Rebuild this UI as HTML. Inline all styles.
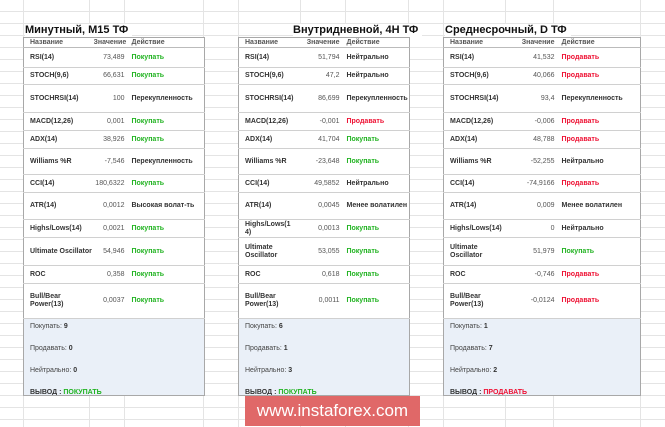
<!DOCTYPE html>
<html><head><meta charset="utf-8"><style>
*{margin:0;padding:0;box-sizing:border-box}
body{width:665px;height:427px;overflow:hidden;background:#fff;position:relative;font-family:"Liberation Sans",Arial,sans-serif;
background-image:repeating-linear-gradient(to bottom,transparent 0,transparent 11px,#e4e4e4 11px,#e4e4e4 12px);}
.v{position:absolute;top:0;width:1px;height:427px;background:#e4e4e4}
.t{position:absolute;top:24px;font-size:11px;font-weight:bold;color:#111;background:#fff;height:13px;line-height:13px;padding-right:4px}
table{position:absolute;top:37px;border-collapse:collapse;table-layout:fixed;background:#fff;border:1px solid #a8a8a8;font-size:7px;color:#444}
td{border-top:1px solid #d0d0d0;vertical-align:middle;padding:0 0 0 6px;line-height:8px;overflow:hidden;white-space:nowrap}
td.n{font-weight:bold;color:#333;white-space:normal}
td.val{text-align:right;padding:0 3px 0 0;color:#555}
td.a{font-weight:bold;color:#333;padding-left:4px}
tr.h td{height:10px;color:#555;border-top:none;border-bottom:1px solid #bbb;font-weight:bold}
.g{color:#22b322!important}.r{color:#ee1133!important}
td.s{background:#eaf0f8;padding:0 0 0 6px;vertical-align:top;white-space:normal;color:#444}
td.s div{height:76px;line-height:22px;margin-top:-3px}
td.s b{color:#333}
.wm{position:absolute;left:245px;top:396px;width:175px;height:30px;background:#e06868;color:#fff;font-size:17px;line-height:30px;text-align:center}
</style></head><body>
<div class="v" style="left:23px"></div><div class="v" style="left:89px"></div><div class="v" style="left:124px"></div><div class="v" style="left:203px"></div><div class="v" style="left:238px"></div><div class="v" style="left:300px"></div><div class="v" style="left:345px"></div><div class="v" style="left:408px"></div><div class="v" style="left:443px"></div><div class="v" style="left:505px"></div><div class="v" style="left:553px"></div><div class="v" style="left:640px"></div>

<div class="t" style="left:25px">Минутный, M15 ТФ</div>
<div class="t" style="left:293px">Внутридневной, 4H ТФ</div>
<div class="t" style="left:445px">Среднесрочный, D ТФ</div>

<table style="left:23px;width:181px">
<colgroup><col style="width:70px"><col style="width:34px"><col style="width:77px"></colgroup>
<tr class="h"><td>Название</td><td class="val">Значение</td><td class="a" style="color:#555">Действие</td></tr>
<tr style="height:20px"><td class="n">RSI(14)</td><td class="val">73,489</td><td class="a g">Покупать</td></tr>
<tr style="height:17px"><td class="n">STOCH(9,6)</td><td class="val">66,631</td><td class="a g">Покупать</td></tr>
<tr style="height:28px"><td class="n">STOCHRSI(14)</td><td class="val">100</td><td class="a">Перекупленность</td></tr>
<tr style="height:18px"><td class="n">MACD(12,26)</td><td class="val">0,001</td><td class="a g">Покупать</td></tr>
<tr style="height:18px"><td class="n">ADX(14)</td><td class="val">38,926</td><td class="a g">Покупать</td></tr>
<tr style="height:26px"><td class="n">Williams %R</td><td class="val">-7,546</td><td class="a">Перекупленность</td></tr>
<tr style="height:18px"><td class="n">CCI(14)</td><td class="val">180,6322</td><td class="a g">Покупать</td></tr>
<tr style="height:27px"><td class="n">ATR(14)</td><td class="val">0,0012</td><td class="a">Высокая волат-ть</td></tr>
<tr style="height:18px"><td class="n">Highs/Lows(14)</td><td class="val">0,0021</td><td class="a g">Покупать</td></tr>
<tr style="height:28px"><td class="n" style="white-space:nowrap">Ultimate Oscillator</td><td class="val">54,946</td><td class="a g">Покупать</td></tr>
<tr style="height:18px"><td class="n">ROC</td><td class="val">0,358</td><td class="a g">Покупать</td></tr>
<tr style="height:35px"><td class="n">Bull/Bear<br>Power(13)</td><td class="val">0,0037</td><td class="a g">Покупать</td></tr>
<tr style="height:77px"><td class="s" colspan="3"><div>Покупать: <b>9</b><br>Продавать: <b>0</b><br>Нейтрально: <b>0</b><br><b>ВЫВОД : </b><b class="g">ПОКУПАТЬ</b></div></td></tr>
</table>

<table style="left:238px;width:171px">
<colgroup><col style="width:62px"><col style="width:42px"><col style="width:67px"></colgroup>
<tr class="h"><td>Название</td><td class="val">Значение</td><td class="a" style="color:#555">Действие</td></tr>
<tr style="height:20px"><td class="n">RSI(14)</td><td class="val">51,794</td><td class="a">Нейтрально</td></tr>
<tr style="height:17px"><td class="n">STOCH(9,6)</td><td class="val">47,2</td><td class="a">Нейтрально</td></tr>
<tr style="height:28px"><td class="n">STOCHRSI(14)</td><td class="val">86,699</td><td class="a">Перекупленность</td></tr>
<tr style="height:18px"><td class="n">MACD(12,26)</td><td class="val">-0,001</td><td class="a r">Продавать</td></tr>
<tr style="height:18px"><td class="n">ADX(14)</td><td class="val">41,704</td><td class="a g">Покупать</td></tr>
<tr style="height:26px"><td class="n">Williams %R</td><td class="val">-23,648</td><td class="a g">Покупать</td></tr>
<tr style="height:18px"><td class="n">CCI(14)</td><td class="val">49,5852</td><td class="a">Нейтрально</td></tr>
<tr style="height:27px"><td class="n">ATR(14)</td><td class="val">0,0045</td><td class="a">Менее волатилен</td></tr>
<tr style="height:18px"><td class="n">Highs/Lows(1<br>4)</td><td class="val">0,0013</td><td class="a g">Покупать</td></tr>
<tr style="height:28px"><td class="n">Ultimate<br>Oscillator</td><td class="val">53,055</td><td class="a g">Покупать</td></tr>
<tr style="height:18px"><td class="n">ROC</td><td class="val">0,618</td><td class="a g">Покупать</td></tr>
<tr style="height:35px"><td class="n">Bull/Bear<br>Power(13)</td><td class="val">0,0011</td><td class="a g">Покупать</td></tr>
<tr style="height:77px"><td class="s" colspan="3"><div>Покупать: <b>6</b><br>Продавать: <b>1</b><br>Нейтрально: <b>3</b><br><b>ВЫВОД : </b><b class="g">ПОКУПАТЬ</b></div></td></tr>
</table>

<table style="left:443px;width:197px">
<colgroup><col style="width:72px"><col style="width:42px"><col style="width:83px"></colgroup>
<tr class="h"><td>Название</td><td class="val">Значение</td><td class="a" style="color:#555">Действие</td></tr>
<tr style="height:20px"><td class="n">RSI(14)</td><td class="val">41,532</td><td class="a r">Продавать</td></tr>
<tr style="height:17px"><td class="n">STOCH(9,6)</td><td class="val">40,066</td><td class="a r">Продавать</td></tr>
<tr style="height:28px"><td class="n">STOCHRSI(14)</td><td class="val">93,4</td><td class="a">Перекупленность</td></tr>
<tr style="height:18px"><td class="n">MACD(12,26)</td><td class="val">-0,006</td><td class="a r">Продавать</td></tr>
<tr style="height:18px"><td class="n">ADX(14)</td><td class="val">48,788</td><td class="a r">Продавать</td></tr>
<tr style="height:26px"><td class="n">Williams %R</td><td class="val">-52,255</td><td class="a">Нейтрально</td></tr>
<tr style="height:18px"><td class="n">CCI(14)</td><td class="val">-74,9166</td><td class="a r">Продавать</td></tr>
<tr style="height:27px"><td class="n">ATR(14)</td><td class="val">0,009</td><td class="a">Менее волатилен</td></tr>
<tr style="height:18px"><td class="n">Highs/Lows(14)</td><td class="val">0</td><td class="a">Нейтрально</td></tr>
<tr style="height:28px"><td class="n">Ultimate<br>Oscillator</td><td class="val">51,979</td><td class="a g">Покупать</td></tr>
<tr style="height:18px"><td class="n">ROC</td><td class="val">-0,746</td><td class="a r">Продавать</td></tr>
<tr style="height:35px"><td class="n">Bull/Bear<br>Power(13)</td><td class="val">-0,0124</td><td class="a r">Продавать</td></tr>
<tr style="height:77px"><td class="s" colspan="3"><div>Покупать: <b>1</b><br>Продавать: <b>7</b><br>Нейтрально: <b>2</b><br><b>ВЫВОД : </b><b class="r">ПРОДАВАТЬ</b></div></td></tr>
</table>

<div class="wm">www.instaforex.com</div>
</body></html>
